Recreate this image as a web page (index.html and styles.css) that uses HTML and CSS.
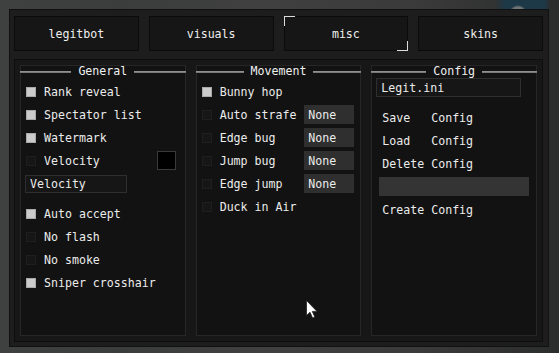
FILE: index.html
```html
<!DOCTYPE html>
<html>
<head>
<meta charset="utf-8">
<link rel="stylesheet" href="styles.css">
</head>
<body>
<div class="window">
  <div class="tabs">
    <div class="tab">legitbot</div>
    <div class="tab">visuals</div>
    <div class="tab active">misc<span class="corner tl"></span><span class="corner br"></span></div>
    <div class="tab">skins</div>
  </div>
  <div class="child">
    <section class="group">
      <div class="group-title"><i></i><span>General</span><i></i></div>
      <div class="rows">
        <div class="row"><span class="cb on"></span><span class="label">Rank reveal</span></div>
        <div class="row"><span class="cb on"></span><span class="label">Spectator list</span></div>
        <div class="row"><span class="cb on"></span><span class="label">Watermark</span></div>
        <div class="row"><span class="cb"></span><span class="label">Velocity</span><span class="swatch"></span></div>
        <div class="row input-row"><div class="input velo">Velocity</div></div>
        <div class="row"><span class="cb on"></span><span class="label">Auto accept</span></div>
        <div class="row"><span class="cb"></span><span class="label">No flash</span></div>
        <div class="row"><span class="cb"></span><span class="label">No smoke</span></div>
        <div class="row"><span class="cb on"></span><span class="label">Sniper crosshair</span></div>
      </div>
    </section>
    <section class="group">
      <div class="group-title"><i></i><span>Movement</span><i></i></div>
      <div class="rows">
        <div class="row"><span class="cb on"></span><span class="label">Bunny hop</span></div>
        <div class="row"><span class="cb"></span><span class="label">Auto strafe</span><span class="combo">None</span></div>
        <div class="row"><span class="cb"></span><span class="label">Edge bug</span><span class="combo">None</span></div>
        <div class="row"><span class="cb"></span><span class="label">Jump bug</span><span class="combo">None</span></div>
        <div class="row"><span class="cb"></span><span class="label">Edge jump</span><span class="combo">None</span></div>
        <div class="row"><span class="cb"></span><span class="label">Duck in Air</span></div>
      </div>
    </section>
    <section class="group">
      <div class="group-title"><i></i><span>Config</span><i></i></div>
      <div class="input cfg-name">Legit.ini</div>
      <div class="cfg-rows">
        <div class="row btn">Save   Config</div>
        <div class="row btn">Load   Config</div>
        <div class="row btn">Delete Config</div>
        <div class="row"><div class="bar"></div></div>
        <div class="row btn">Create Config</div>
      </div>
    </section>
  </div>
</div>
<svg class="cursor" width="13" height="20" viewBox="0 0 13 20"><path d="M0.5 0.5 L0.5 15.5 L4 12.2 L6.6 18 L8.8 17 L6.3 11.4 L11 11.4 Z" fill="#ffffff" stroke="#222" stroke-width="0.8"/></svg>
</body>
</html>
```
FILE: styles.css
```css
* { box-sizing: border-box; }
html, body { margin: 0; padding: 0; }
body {
  width: 559px;
  height: 353px;
  overflow: hidden;
  position: relative;
  padding: 9px;
  font-family: "DejaVu Sans Mono", "Liberation Mono", monospace;
  font-size: 11.6px;
  color: #ececec;
  background:
    radial-gradient(circle at 518px 14px, #8a8f92 0, #6d7275 7px, rgba(30,55,70,0) 9px),
    linear-gradient(to right, rgba(0,0,0,0) 495px, #1d3847 505px, #1d3847 545px, rgba(0,0,0,0) 550px) top / 100% 9px no-repeat,
    linear-gradient(to right, #3f4040 0px, #3b3c3c 120px, #404040 260px, #3a3a3a 420px, #2b2c2c 559px);
}
.window {
  width: 540px;
  height: 338px;
  background: #1d1d1d;
  border: 1px solid #111;
  padding: 6px 5px 4px 4px;
  display: flex;
  flex-direction: column;
}
.tabs {
  display: grid;
  grid-template-columns: repeat(4, 1fr);
  column-gap: 10px;
  height: 35px;
}
.tab {
  position: relative;
  background: #161616;
  border: 1px solid #0b0b0b;
  display: flex;
  align-items: center;
  justify-content: center;
  color: #eeeeee;
}
.corner {
  position: absolute;
  width: 11px;
  height: 10px;
  border-color: #dcdcdc;
  border-style: solid;
  border-width: 0;
}
.corner.tl { top: -1px; left: -1px; border-top-width: 1px; border-left-width: 1px; }
.corner.br { bottom: -1px; right: -1px; border-bottom-width: 1px; border-right-width: 1px; }
.child {
  margin-top: 8px;
  height: 283px;
  background: #171717;
  border: 1px solid #0e0e0e;
  padding: 5px;
  display: grid;
  grid-template-columns: repeat(3, 1fr);
  column-gap: 10px;
}
.group {
  background: #121212;
  border: 1px solid #262626;
  display: flex;
  flex-direction: column;
}
.group-title {
  height: 11px;
  display: flex;
  align-items: center;
  gap: 7px;
  margin: 0 -1px;
  line-height: 11px;
}
.group-title i {
  flex: 1;
  height: 2px;
  background: linear-gradient(to bottom, #9a9a9a, #6e6e6e);
}
.group-title span { color: #f0f0f0; }
.rows { margin-top: 3px; padding: 0 5px; }
.row {
  height: 23px;
  display: flex;
  align-items: center;
}
.cb {
  width: 10px;
  height: 10px;
  margin-right: 8px;
  background: #161616;
  border: 1px solid #1f1f1f;
  flex: none;
}
.cb.on {
  background: #cbcbcb;
  border-color: #a9a9a9;
}
.label { flex: 1; white-space: pre; }
.swatch {
  width: 19px;
  height: 19px;
  background: #000;
  border: 1px solid #3a3a3a;
  margin-right: 4px;
}
.input {
  height: 18px;
  background: #161616;
  border: 1px solid #2e2e2e;
  display: flex;
  align-items: center;
  padding-left: 4px;
}
.input-row { margin-bottom: 7px; }
.velo { width: 102px; margin-left: -1px; }
.combo {
  width: 50px;
  height: 19px;
  background: #2f2f2f;
  display: flex;
  align-items: center;
  padding-left: 4px;
  margin-right: 1px;
}
.cfg-name {
  width: 145px;
  height: 19px;
  margin: 1px 0 0 4px;
}
.cfg-rows { margin-top: 9px; padding: 0 0 0 5px; }
.btn { white-space: pre; padding-left: 5px; }
.bar {
  width: 150px;
  height: 19px;
  background: #343434;
  margin-left: 2px;
}
.cursor {
  position: absolute;
  left: 306px;
  top: 300px;
}
```
